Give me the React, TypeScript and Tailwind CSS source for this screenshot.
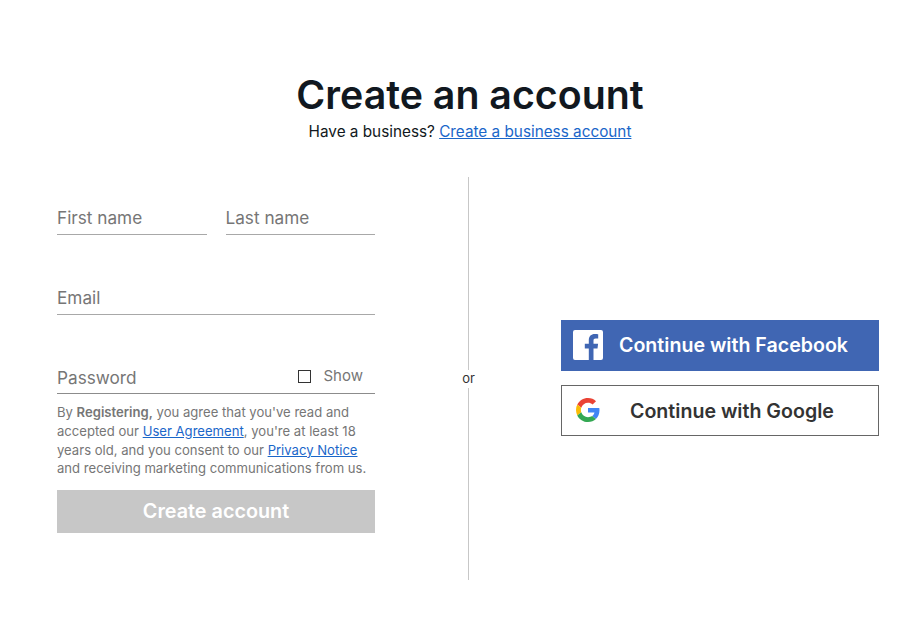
// Sign-up page: heading, registration form on the left, social buttons on the right.

function FacebookIcon() {
  return (
    <svg width="30" height="32" viewBox="0 0 30 32" className="shrink-0">
      <path
        fill="#fff"
        d="M2 1h26a2 2 0 0 1 2 2v26a2 2 0 0 1-2 2h-7.5V19.5h4l.6-4.7h-4.6v-3c0-1.4.4-2.3 2.3-2.3h2.4V5.3c-.4-.1-1.900-.2-3.500-.2-3.500 0-5.900 2.100-5.900 6.100v3.600h-4v4.700h4V31H2a2 2 0 0 1-2-2V3a2 2 0 0 1 2-2z"
      />
    </svg>
  );
}

function GoogleIcon() {
  return (
    <svg width="24" height="24" viewBox="0 0 48 48" className="shrink-0">
      <path fill="#EA4335" d="M24 9.500c3.540 0 6.710 1.220 9.210 3.600l6.850-6.850C35.900 2.380 30.470 0 24 0 14.620 0 6.510 5.380 2.560 13.220l7.980 6.190C12.430 13.720 17.740 9.500 24 9.500z" />
      <path fill="#4285F4" d="M46.980 24.550c0-1.570-.15-3.090-.38-4.550H24v9.020h12.940c-.58 2.960-2.260 5.480-4.780 7.180l7.730 6c4.510-4.180 7.090-10.360 7.090-17.650z" />
      <path fill="#FBBC05" d="M10.530 28.590c-.48-1.450-.76-2.990-.76-4.590s.27-3.140.76-4.590l-7.980-6.190C.92 16.460 0 20.120 0 24c0 3.880.92 7.540 2.560 10.780l7.970-6.190z" />
      <path fill="#34A853" d="M24 48c6.480 0 11.930-2.130 15.890-5.810l-7.730-6c-2.150 1.450-4.920 2.300-8.160 2.300-6.260 0-11.570-4.220-13.470-9.910l-7.980 6.190C6.510 42.620 14.620 48 24 48z" />
    </svg>
  );
}

function Field({ label, className }: { label: string; className?: string }) {
  return (
    <div className={`h-[31px] border-b border-[#a8a8a8] text-[17.200px] leading-[28px] text-[#767676] ${className ?? ''}`}>
      {label}
    </div>
  );
}

export default function App() {
  return (
    <div className="w-[912px] h-[620px] overflow-hidden bg-white font-['Inter',sans-serif] text-[#111820]">
      {/* ── Heading ── */}
      <header className="pl-[28px] pt-[70px] text-center">
        <h1 className="text-[39.300px] leading-[50px] font-semibold">Create an account</h1>
        <p className="mt-[2px] text-[15.300px] leading-[20px]">
          Have a business?{' '}
          <a className="text-[#1a66c9] underline">Create a business account</a>
        </p>
      </header>

      <main className="mt-[35px] flex h-[403px] pl-[57px]">
        {/* ── Form ── */}
        <form className="w-[318px] shrink-0 pt-[27px]">
          <div className="flex gap-[19px]">
            <Field label="First name" className="flex-1" />
            <Field label="Last name" className="flex-1" />
          </div>
          <Field label="Email" className="mt-[49px]" />
          <div className="mt-[48px] flex h-[31px] items-start justify-between border-b border-[#8c8c8c] pr-[12px] text-[17.200px] leading-[30px] text-[#767676]">
            <span>Password</span>
            <span className="flex items-center gap-[13px] text-[15px] leading-[26px]">
              <span className="h-[13px] w-[13px] border border-[#333]" />
              Show
            </span>
          </div>
          <p className="mt-[9px] text-[13.100px] leading-[18.800px] text-[#767676]">
            By <b className="font-semibold">Registering,</b> you agree that you've read and accepted our{' '}
            <a className="text-[#1a66c9] underline">User Agreement</a>, you're at least 18 years old, and you consent to our{' '}
            <a className="text-[#1a66c9] underline">Privacy Notice</a> and receiving marketing communications from us.
          </p>
          <button type="button" className="mt-[12px] block h-[43px] w-full bg-[#c7c7c7] text-[19.800px] font-semibold text-white">
            Create account
          </button>
        </form>

        {/* ── Divider ── */}
        <div className="ml-[93px] flex w-[1px] shrink-0 flex-col items-center">
          <div className="w-px flex-1 bg-[#c7c7c7]" />
          <span className="pt-[1px] pb-[3px] text-[13px] leading-[14px] text-[#333]">or</span>
          <div className="w-px flex-1 bg-[#c7c7c7]" />
        </div>

        {/* ── Social buttons ── */}
        <div className="ml-[92px] flex w-[318px] shrink-0 flex-col justify-center gap-[14px] pb-[2px]">
          <button type="button" className="flex h-[51px] items-center bg-[#4066b3] pl-[12px] text-[19.600px] font-semibold text-white">
            <FacebookIcon />
            <span className="ml-[16px] mt-[2px]">Continue with Facebook</span>
          </button>
          <button type="button" className="flex h-[51px] items-center border border-[#666] pl-[14px] text-[19.600px] font-semibold text-[#333]">
            <GoogleIcon />
            <span className="ml-[30px] mt-[4px]">Continue with Google</span>
          </button>
        </div>
      </main>
    </div>
  );
}
